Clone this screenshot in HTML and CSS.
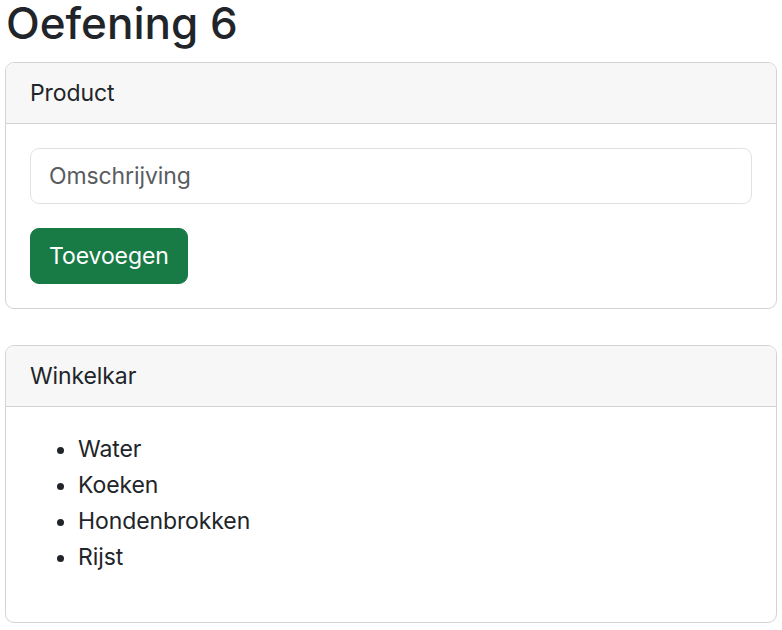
FILE: index.html
```html
<!DOCTYPE html>
<html lang="nl">
<head>
<meta charset="utf-8">
<title>Oefening 6</title>
<link rel="stylesheet" href="styles.css">
</head>
<body>
<div class="page">
  <h1 class="title">Oefening 6</h1>
  <section class="card">
    <div class="card-header">Product</div>
    <div class="card-body">
      <input class="field" type="text" placeholder="Omschrijving">
      <button class="btn" type="button">Toevoegen</button>
    </div>
  </section>
  <section class="card">
    <div class="card-header">Winkelkar</div>
    <div class="card-body">
      <ul class="list">
        <li>Water</li>
        <li>Koeken</li>
        <li>Hondenbrokken</li>
        <li>Rijst</li>
      </ul>
    </div>
  </section>
</div>
</body>
</html>
```
FILE: styles.css
```css
html, body {
  margin: 0;
  padding: 0;
  background: #fff;
}
body {
  font-family: Inter, "Liberation Sans", sans-serif;
  color: #212529;
  font-size: 23px;
  line-height: 36px;
  letter-spacing: -0.1px;
}
.page {
  padding: 0 5px;
}
.title {
  margin: 0 0 16px 0;
  font-size: 44px;
  line-height: 46px;
  font-weight: 500;
  letter-spacing: 0;
  padding-left: 1px;
}
.card {
  border: 1px solid #d3d3d3;
  border-radius: 9px;
  overflow: hidden;
  margin-bottom: 36px;
}
.card-header {
  background: #f7f7f7;
  border-bottom: 1px solid #d3d3d3;
  padding: 12px 24px;
  line-height: 36px;
}
.card-body {
  padding: 24px;
  display: flex;
  flex-direction: column;
  align-items: flex-start;
}
.field {
  box-sizing: border-box;
  width: 100%;
  height: 56px;
  border: 1px solid #dee2e6;
  border-radius: 9px;
  padding: 0 18px;
  font-family: inherit;
  font-size: 23px;
  letter-spacing: -0.1px;
  color: #212529;
  margin: 0 0 24px 0;
  outline: none;
}
.field::placeholder {
  color: #595c5f;
}
.btn {
  box-sizing: border-box;
  height: 56px;
  padding: 0 18px;
  border: 1px solid #187a45;
  background: #187a45;
  color: #fff;
  border-radius: 9px;
  font-family: inherit;
  font-size: 23px;
  letter-spacing: -0.1px;
  cursor: pointer;
}
.list {
  margin: 0 0 23px 0;
  padding-left: 48px;
}
```
